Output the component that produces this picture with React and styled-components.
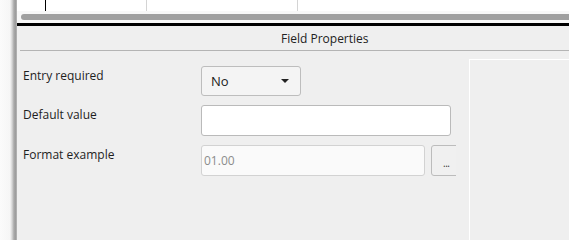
import React from 'react'
import styled, { createGlobalStyle } from 'styled-components'

const GlobalStyle = createGlobalStyle`
  html, body {
    margin: 0;
    padding: 0;
    background: #efefef;
    overflow: hidden;
  }
  body {
    font-family: 'Open Sans', 'Noto Sans', sans-serif;
    font-size: 12px;
    color: #1e1e1e;
  }
`

const Window = styled.div`
  display: flex;
  width: 569px;
  height: 100vh;
  min-height: 216px;
  overflow: hidden;
`

const EdgeShadow = styled.div`
  flex: 0 0 17px;
  background: linear-gradient(to right, #fbfbfb 0, #f6f6f6 10px, #d6d6d6 12px, #a8a8a8 14px, #9a9a9a 16px, #c4c4c4 17px);
`

const Main = styled.div`
  flex: 1;
  display: flex;
  flex-direction: column;
  min-width: 0;
  overflow: hidden;
`

const TableStrip = styled.div`
  height: 11px;
  background: #fff;
  display: flex;
`

const TableCell = styled.div`
  flex: 0 0 ${p => p.$w}px;
  border-right: 1px solid ${p => p.$dark ? '#000' : '#d4d4d4'};
`

const ScrollTrack = styled.div`
  height: 12px;
  background: #f8f8f8;
  padding: 3px 0 3px 4px;
  box-sizing: border-box;
  display: flex;
  align-items: center;
`

const ScrollThumb = styled.div`
  flex: 1;
  height: 6px;
  background: #a0a0a0;
  border-radius: 3px 0 0 3px;
`

const Splitter = styled.div`
  height: 3px;
  background: #000;
`

const Section = styled.div`
  flex: 1;
  display: flex;
  flex-direction: column;
  background: #efefef;
`

const SectionTitle = styled.div`
  height: 25px;
  margin-left: 3px;
  border-bottom: 1px solid #b4b4b4;
  display: flex;
  align-items: center;
  padding: 1px 0 0 261px;
  box-sizing: border-box;
  font-size: 12px;
  color: #222;
`

const Body = styled.div`
  flex: 1;
  display: flex;
  padding-top: 8px;
`

const Form = styled.div`
  flex: 0 0 439px;
  overflow: hidden;
  padding: 7px 0 0 6px;
  box-sizing: border-box;
  display: flex;
  flex-direction: column;
  gap: 9px;
`

const Row = styled.div`
  display: flex;
  align-items: flex-start;
  white-space: nowrap;
`

const Label = styled.div`
  flex: 0 0 178px;
  line-height: 18px;
  padding-top: 1px;
  color: #1e1e1e;
`

const Select = styled.div`
  flex: 0 0 auto;
  width: 100px;
  height: 30px;
  box-sizing: border-box;
  background: #f4f4f4;
  border: 1px solid #bdbdbd;
  border-radius: 3px;
  display: flex;
  align-items: center;
  justify-content: space-between;
  padding: 0 11px 0 9px;
  font-size: 13px;
  color: #1a1a1a;
`

const Arrow = styled.span`
  width: 0;
  height: 0;
  border-left: 4px solid transparent;
  border-right: 4px solid transparent;
  border-top: 4px solid #222;
`

const TextBox = styled.div`
  flex: 0 0 ${p => p.$w}px;
  height: 31px;
  box-sizing: border-box;
  background: ${p => p.$disabled ? '#fafafa' : '#fff'};
  border: 1px solid ${p => p.$disabled ? '#d2d2d2' : '#bababa'};
  border-radius: 3px;
  display: flex;
  align-items: center;
  padding-left: 2px;
  font-size: 12px;
  color: #8c8c8c;
`

const DotsButton = styled.div`
  margin-left: 6px;
  flex: 0 0 32px;
  height: 31px;
  box-sizing: border-box;
  background: #f0f0f0;
  border: 1px solid #bcbcbc;
  border-radius: 3px;
  display: flex;
  align-items: center;
  padding: 5px 0 0 11px;
  font-size: 10px;
  color: #333;
  letter-spacing: -0.5px;
`

const SidePanel = styled.div`
  flex: 1;
  margin-left: 13px;
  border-left: 1px solid #fff;
  border-top: 1px solid #fff;
  background: #efefef;
`

const App = () => {
  return (
    <>
      <GlobalStyle />
      <Window>
        <EdgeShadow />
        <Main>
          <TableStrip>
            <TableCell $w={28} $dark />
            <TableCell $w={100} />
            <TableCell $w={150} />
          </TableStrip>
          <ScrollTrack>
            <ScrollThumb />
          </ScrollTrack>
          <Splitter />
          <Section>
            <SectionTitle>Field Properties</SectionTitle>
            <Body>
              <Form>
                <Row>
                  <Label>Entry required</Label>
                  <Select>
                    <span>No</span>
                    <Arrow />
                  </Select>
                </Row>
                <Row>
                  <Label>Default value</Label>
                  <TextBox $w={250} />
                </Row>
                <Row>
                  <Label>Format example</Label>
                  <TextBox $w={224} $disabled>01.00</TextBox>
                  <DotsButton>...</DotsButton>
                </Row>
              </Form>
              <SidePanel />
            </Body>
          </Section>
        </Main>
      </Window>
    </>
  )
}

export default App
